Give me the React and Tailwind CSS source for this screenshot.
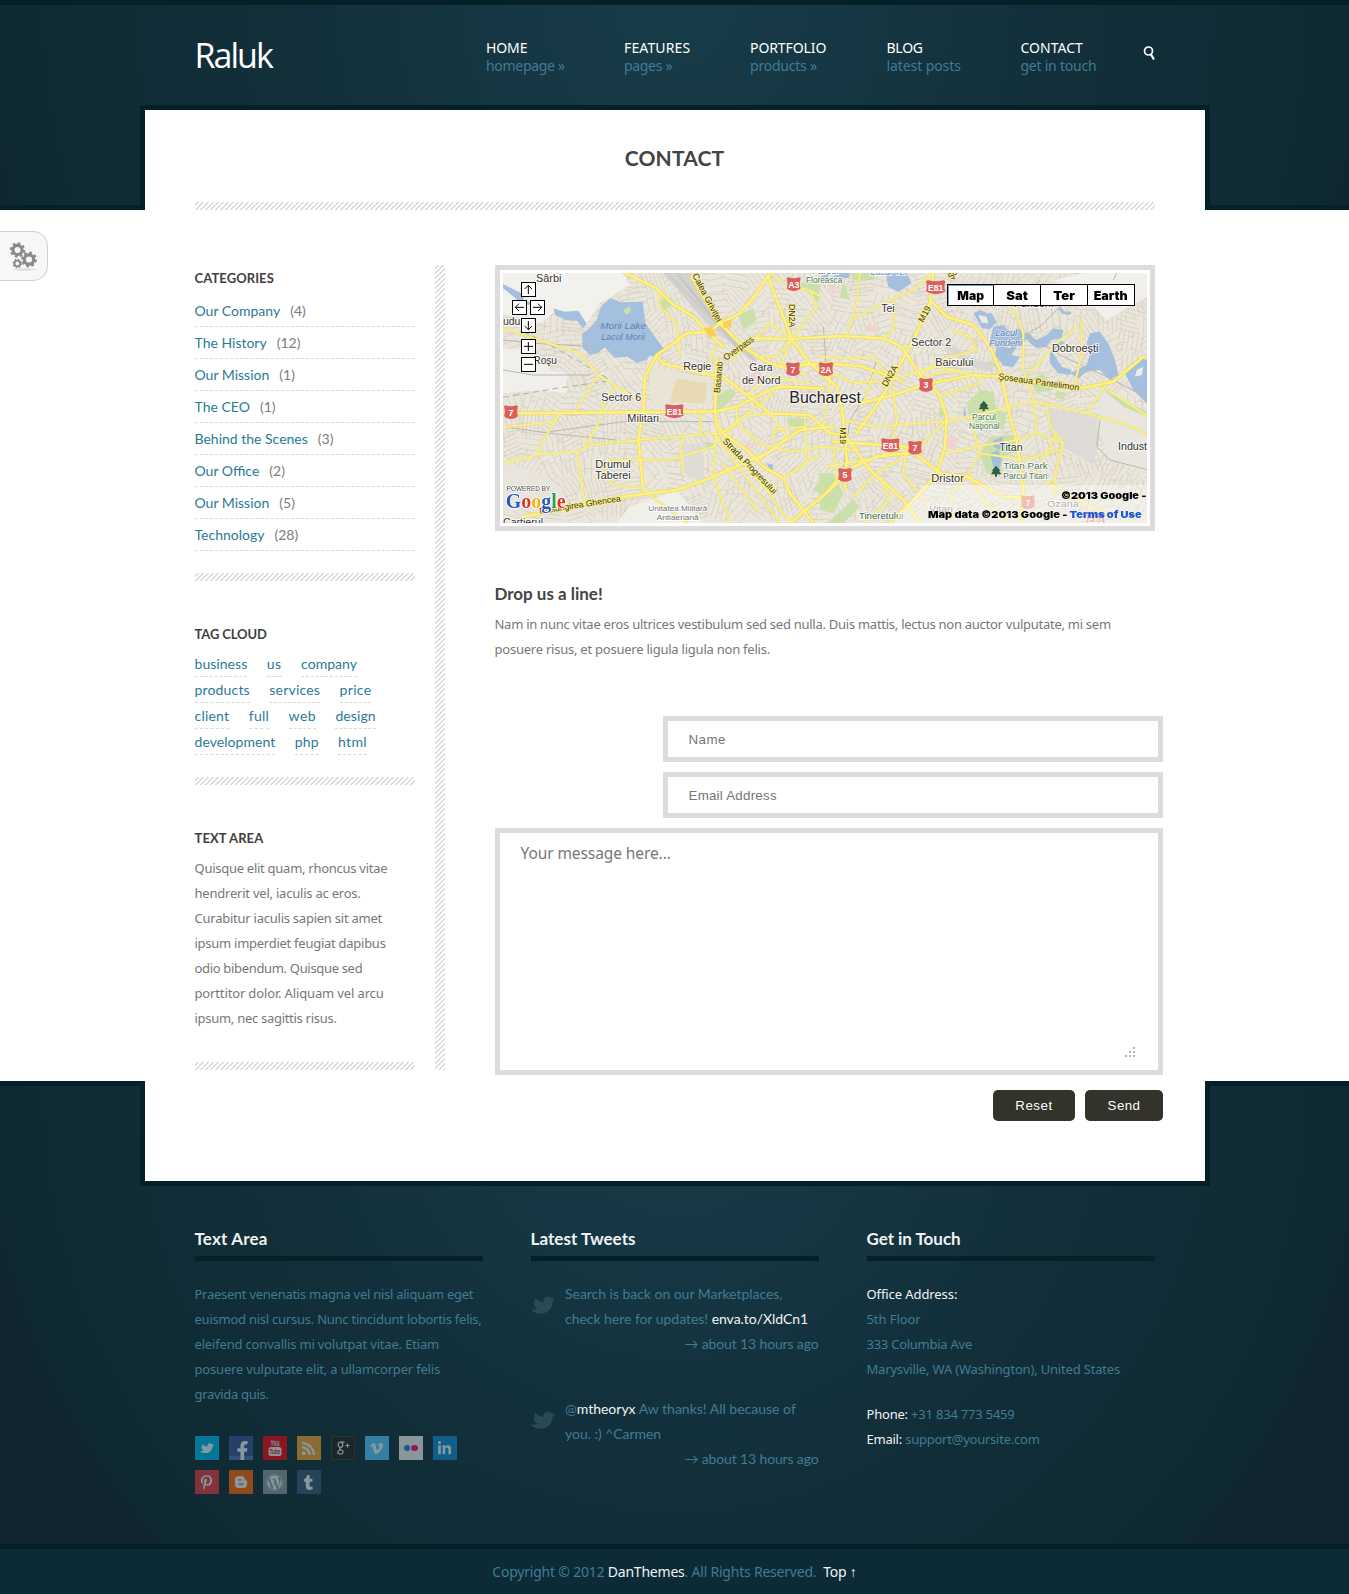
import React, { useLayoutEffect, useRef } from "react";
import {
  FaTwitter, FaFacebookF, FaRss, FaVimeoV, FaLinkedinIn,
  FaPinterestP, FaBloggerB, FaWordpress, FaTumblr,
} from "react-icons/fa";

/* One line of text whose letter spacing is set so that it fills `w` pixels. */
function Line({ w, className = "", children }) {
  const ref = useRef(null);
  useLayoutEffect(() => {
    const el = ref.current;
    el.style.letterSpacing = "0px";
    const natural = el.getBoundingClientRect().width;
    el.style.letterSpacing = (w + 0.8 - natural) / el.textContent.length + "px";
  }, [w]);
  return (
    <span className={"block w-max whitespace-nowrap " + className}>
      <span ref={ref} className="inline-block">{children}</span>
    </span>
  );
}

const Hatch = ({ className = "" }) => (
  <div
    className={
      "bg-[repeating-linear-gradient(135deg,#fff_0,#fff_1.6px,#d9d9d9_2.1px,#d9d9d9_3px,#fff_3.536px)] " + className
    }
  />
);

const nav = [
  ["HOME", 40.5, "homepage »", 78, "w-[138px]"],
  ["FEATURES", 65.5, "pages »", 47.4, "w-[126px]"],
  ["PORTFOLIO", 75.5, "products »", 66, "w-[136.5px]"],
  ["BLOG", 35.5, "latest posts", 73.5, "w-[134px]"],
  ["CONTACT", 61.5, "get in touch", 75, "w-[122px]"],
];

const categories = [
  ["Our Company", 4], ["The History", 12], ["Our Mission", 1], ["The CEO", 1],
  ["Behind the Scenes", 3], ["Our Office", 2], ["Our Mission", 5], ["Technology", 28],
];

const tags = [
  [["business", 52], ["us", 14], ["company", 55]],
  [["products", 54.5], ["services", 50], ["price", 31]],
  [["client", 34], ["full", 19.5], ["web", 26.5], ["design", 39.5]],
  [["development", 80], ["php", 23], ["html", 28]],
];

/* ---------- Map ---------- */

function rng(seed) {
  let s = seed;
  return () => {
    s = (s * 16807) % 2147483647;
    return s / 2147483647;
  };
}

function streetTexture() {
  const r = rng(77);
  const out = [];
  for (let cy = 60; cy < 800; cy += 62) {
    for (let cx = 60; cx < 2000; cx += 62) {
      const a = r() * Math.PI;
      const step = 11 + r() * 9;
      const c = Math.cos(a);
      const s = Math.sin(a);
      for (let k = -36; k <= 36; k += step) {
        const len = 22 + r() * 18;
        out.push(`M${(cx + c * -len - s * k).toFixed(1)} ${(cy + s * -len + c * k).toFixed(1)}L${(cx + c * len - s * k).toFixed(1)} ${(cy + s * len + c * k).toFixed(1)}`);
        if (r() > 0.35) {
          const m = (r() - 0.5) * 50;
          out.push(`M${(cx + c * m - s * k).toFixed(1)} ${(cy + s * m + c * k).toFixed(1)}L${(cx + c * m - s * (k + step)).toFixed(1)} ${(cy + s * m + c * (k + step)).toFixed(1)}`);
        }
      }
    }
  }
  return out.join("");
}
const STREETS = streetTexture();

const majorRoads = [
  "M39 458L90 460L680 454L740 440L830 395L865 380L1000 385",
  "M405 39L500 85L545 130L610 170L660 225L700 260",
  "M605 50L640 110L690 190L760 260L820 300L870 320L1000 310L1110 318L1190 345",
  "M690 190L750 160L800 100L840 39",
  "M690 190L660 215L590 220L550 250L500 285L465 350L460 450L445 540L460 690",
  "M500 290L520 310L640 340L700 350L770 405L840 460L960 465L1020 520L1065 525",
  "M680 300L675 455L680 490L700 520L770 570L820 620L880 655L900 700L970 789",
  "M800 235L905 237L1050 228L1180 235L1235 260L1290 345L1345 400L1370 470L1365 560L1340 640L1300 690L1200 789",
  "M835 50L860 120L905 237L960 310L1000 345L1040 380L1055 440L1065 525L1070 600L1065 690",
  "M1330 39L1320 130L1270 240L1200 370L1150 450L1100 520",
  "M1110 430L1210 405L1300 375L1450 345L1530 350L1620 365L1780 384L1870 365L1960 290",
  "M1320 120L1370 170L1450 195L1500 260L1530 330L1560 470L1580 540L1600 690L1595 789",
  "M1030 545L1250 560L1350 640L1430 650L1540 710L1620 715",
  "M100 770L280 735L400 710L560 690L660 655L830 580L930 510L1030 500",
  "M900 789L1020 690L1090 620L1160 590L1290 575",
  "M1065 525L1140 630L1240 720L1290 789",
];

const minorRoads = [
  "M39 205L130 235L270 280L325 345L445 420",
  "M325 345L255 455", "M375 380L330 455", "M39 502L190 485L210 460L145 565L150 583L260 575L300 555L445 540L690 520",
  "M260 575L285 735", "M330 480L285 560", "M445 600L540 600L670 560L695 520L850 400",
  "M340 650L360 600L445 600", "M340 650L370 675L445 680", "M580 535L570 570L580 635",
  "M505 85L510 140L560 190L570 290", "M640 345L680 260", "M632 450L632 520",
  "M680 490L670 650L720 789", "M680 530L760 640L870 789", "M710 550L830 690L900 789",
  "M700 610L800 750", "M770 405L840 350L960 370", "M840 460L890 530L850 570L800 600",
  "M840 460L760 470L700 530", "M740 440L740 490L810 550L900 575L1000 560L1100 570",
  "M945 500L850 510L850 540", "M945 465L950 610L880 655", "M990 580L880 655",
  "M905 237L840 190L790 240L720 300", "M905 237L870 320L950 345", "M905 237L860 290L810 290",
  "M840 39L900 80L960 90L980 140L905 237", "M990 110L960 90", "M1110 39L1100 130L1070 225",
  "M1095 175L1180 130L1270 90L1330 39", "M1210 120L1210 210L1180 235",
  "M990 290L1060 295L1150 290L1180 330L1240 370", "M990 330L1100 370L1200 360L1340 320L1470 350",
  "M1020 350L1010 440L1000 500", "M1060 480L1150 500L1280 490L1360 485L1440 470L1560 440L1630 425",
  "M1120 430L1150 345", "M1210 380L1220 490L1200 560", "M1350 410L1470 370L1470 345",
  "M1010 620L1130 600L1250 560L1240 640L1330 760", "M1090 710L1160 640L1290 560L1360 490",
  "M1365 580L1460 560L1580 540L1640 520", "M1440 470L1470 580L1540 590L1590 600",
  "M1560 130L1580 170L1600 220L1600 330L1630 420L1640 520L1720 550L1700 620L1690 710",
  "M1630 425L1690 435L1790 460L1900 490L1975 525", "M1790 460L1840 385", "M1620 340L1700 250L1760 200",
  "M1775 175L1775 280L1755 370", "M1670 435L1680 500L1720 550", "M1840 380L1900 420L1975 470",
  "M1470 580L1430 650L1380 700L1390 770", "M1700 520L1640 640L1720 700L1850 760",
  "M1600 600L1710 570", "M1290 345L1350 300L1460 270L1440 230L1390 215",
  "M1440 650L1480 720L1560 789", "M1170 650L1200 720L1120 789", "M1030 560L1040 660L990 720",
  "M39 610L150 583", "M460 690L590 789", "M1290 360L1340 340L1410 330",
];

const grayRoads = [
  "M39 240L130 250L320 260", "M39 330L130 345L300 345", "M39 500L180 520L380 540", "M180 515L400 485L670 485",
  "M1160 300L1130 400L1080 480L1060 620", "M1830 480L1820 560L1860 600L1975 630", "M1730 120L1650 200L1590 230L1540 300",
  "M1880 39L1870 60M1650 60L1600 120", "M1600 220L1720 290L1850 350L1975 415", "M1000 200L1010 330",
];

const parks = [
  "M510 120L540 112L548 135L520 150Z", "M678 410L720 385L738 400L715 430L685 450Z",
  "M745 165L790 145L800 180L760 210Z", "M890 475L950 475L948 500L895 498Z", "M970 690L1000 645L1030 660L1030 700L1000 710Z",
  "M1430 430L1470 390L1510 395L1520 450L1550 460L1540 510L1470 500L1440 480Z",
  "M1470 580L1500 530L1570 525L1580 575L1540 590L1530 650L1490 640Z", "M1350 440L1365 440L1360 470L1345 465Z",
  "M1620 360L1660 340L1690 390L1640 400Z", "M1840 390L1970 455L1970 470L1900 440Z", "M990 640L1030 640L1060 700L1030 760L990 750Z",
  "M1060 60L1080 120L1050 110Z", "M640 545L680 550L660 570Z", "M930 70L990 60L985 130L960 100Z", "M1700 390L1730 400L1720 420L1695 412Z",
  "M1500 300L1530 330L1500 315Z", "M1080 39L1160 39L1150 60L1090 60Z", "M1090 720L1110 740L1060 789L1010 789Z",
];

const water = [
  "M360 115L395 127L458 125L466 190L520 265L500 290L478 288L470 300L440 308L412 290L372 293L345 262L322 280L300 284L278 264L276 222L298 205L320 180L332 140Z",
  "M39 72L105 105L100 120L150 135L145 145L90 125L39 85Z",
  "M190 145L225 155L265 152L290 192L278 205L262 182L228 180L196 165Z",
  "M1190 60L1195 80L1225 95L1265 70L1250 39L1190 39Z",
  "M1450 160L1470 150L1490 160L1505 160L1520 185L1500 208L1475 205L1462 180Z",
  "M1510 200L1540 195L1560 215L1590 205L1600 225L1620 220L1630 235L1590 245L1565 285L1590 290L1570 320L1540 318L1515 285L1520 260L1500 240Z",
  "M1615 225L1640 240L1670 225L1690 205L1720 210L1715 235L1685 240L1670 260L1640 265L1615 245Z",
  "M1700 262L1690 280L1715 320L1745 330L1740 345L1705 340L1680 310L1680 280L1710 240L1725 250Z",
  "M1800 220L1830 215L1855 250L1875 300L1885 345L1860 360L1830 330L1790 335L1765 355L1740 340L1790 315L1800 280L1790 250Z",
  "M1905 340L1925 310L1950 295L1975 300L1975 435L1930 390Z",
  "M1710 140L1725 155L1745 155L1740 165L1718 162L1705 148Z",
  "M1510 540L1540 530L1530 570L1510 560Z", "M1500 580L1525 570L1535 600L1525 640L1510 620Z",
  "M830 610L850 615L845 640Z", "M1040 39L1080 39L1075 55L1030 50Z", "M1425 440L1428 470L1420 465Z", "M990 50L1020 39L1010 60Z",
  "M415 395L425 400L422 420Z",
];

function Label({ x, y, w, s = 32, c = "#333", r = 0, halo = "#fff", children, i }) {
  return (
    <text
      transform={`translate(${x} ${y}) rotate(${r})`}
      textLength={w} lengthAdjust="spacingAndGlyphs" fontSize={s} fill={c}
      stroke={halo} strokeOpacity="0.75" strokeWidth="6" strokeLinejoin="round"
      fontStyle={i ? "italic" : "normal"} style={{ paintOrder: "stroke" }}
    >
      {children}
    </text>
  );
}

function Shield({ x, y, w = 42, children }) {
  return (
    <g transform={`translate(${x} ${y})`}>
      <path
        d={`M${-w / 2} -18L${-w / 2 + 6} -21Q0 -15 ${w / 2 - 6} -21L${w / 2} -18Q${w / 2 - 5} 0 ${w / 2} 12Q${w / 4} 22 0 20Q${-w / 4} 22 ${-w / 2} 12Q${-w / 2 + 5} 0 ${-w / 2} -18Z`}
        fill="#dc5f60"
      />
      <text y="10" textAnchor="middle" fontSize="26" fontWeight="bold" fill="#fff">{children}</text>
    </g>
  );
}

function MapButton({ x, y, d }) {
  return (
    <g transform={`translate(${x} ${y})`}>
      <rect x="3" y="3" width="42" height="42" fill="#777" />
      <rect x="1.5" y="1.5" width="42" height="42" fill="#fff" stroke="#000" strokeWidth="3" />
      <path d={d} stroke="#000" strokeWidth="3" fill="none" />
    </g>
  );
}

function CityMap() {
  return (
    <svg width="644" height="250" viewBox="39 39 1932 750" className="block" fontFamily='"Liberation Sans", sans-serif'>
      <rect x="39" y="39" width="1932" height="750" fill="#ebe6dc" />
      <path d={STREETS} stroke="#d5cdbd" strokeWidth="2.2" fill="none" />
      <path d="M39 39L400 39L420 75L330 130L290 190L200 150L150 190L39 160Z" fill="#f3f1ee" />
      <path d="M39 265L120 270L180 330L230 340L230 400L150 390L39 400Z" fill="#f1efec" />
      <path d="M120 630L215 680L225 730L39 760L39 600Z" fill="#e9e5dd" />
      <path d="M380 789L420 740L560 690L640 789Z" fill="#f1efea" />
      <path d="M480 320L600 345L660 350L665 440L480 440Z" fill="#e9e4d6" />
      <path d="M560 355L650 370L645 430L540 425Z" fill="#e6d9b4" />
      <path d="M580 550L640 555L640 670L585 640Z" fill="#dfdbd5" />
      <path d="M1670 440L1790 465L1870 510L1830 530L1810 612L1720 560L1680 500Z" fill="#dedad5" />
      <path d="M1840 390L1975 470L1975 640L1860 600L1820 500Z" fill="#e9e6df" />
      <path d="M1780 39L1971 39L1971 110L1850 180L1800 130L1690 60Z" fill="#f2f0ec" />
      <path d="M1350 250L1390 255L1440 300L1520 310L1500 335L1440 320Z" fill="#d9d6d1" />
      <path d="M520 39L600 39L700 190L800 300L780 300L650 190Z" fill="#d3d2cf" />
      <path d="M530 39L690 200M560 39L710 230L800 305M580 60L740 260" stroke="#bfbfbd" strokeWidth="3" fill="none" />
      <path d="M785 340L830 350L810 375L775 360ZM760 540L795 555L780 575ZM1010 70L1040 80L1030 110ZM1130 195L1160 195L1160 215L1130 215ZM1370 530L1400 530L1395 570L1370 565Z" fill="#f2d3cd" />
      <path d={parks.join("")} fill="#cadfaa" />
      <path d={water.join("")} fill="#a5bfdf" />
      <path d="M400 150L420 138L422 155L408 165Z" fill="#cadfaa" />
      <path d="M1465 165L1490 170L1495 190L1475 188ZM1550 240L1575 240L1560 265L1545 260ZM1940 330L1960 320L1955 345L1935 350Z" fill="#efece4" />
      <g fill="none" stroke="#b9b7b3" strokeWidth="3">{grayRoads.map((d) => <path key={d} d={d} />)}</g>
      <path d="M100 215L190 260L260 300L360 360M39 412L200 385L360 362" stroke="#b0aeac" strokeWidth="3" strokeDasharray="18 12" fill="none" />
      <g fill="none" strokeLinejoin="round" strokeLinecap="round">
        <g stroke="#e3d67a" strokeWidth="7">{minorRoads.map((d) => <path key={d} d={d} />)}</g>
        <g stroke="#e3d26c" strokeWidth="11">{majorRoads.map((d) => <path key={d} d={d} />)}</g>
        <g stroke="#fbf286" strokeWidth="5">{minorRoads.map((d) => <path key={d} d={d} />)}</g>
        <g stroke="#fff27c" strokeWidth="8">{majorRoads.map((d) => <path key={d} d={d} />)}</g>
      </g>
      <path d="M640 205L665 200L680 225L660 232ZM700 185L725 180L722 200L700 205Z" fill="#f7cf55" />

      <Label x={138} y={66} w={76}>Sârbi</Label>
      <Label x={39} y={195} w={52}>udu</Label>
      <Label x={130} y={313} w={71}>Roşu</Label>
      <Label x={331} y={208} w={137} s={29} c="#5b82b5" halo="#a5bfdf" i>Morii Lake</Label>
      <Label x={334} y={240} w={130} s={25} c="#5b82b5" halo="#a5bfdf" i>Lacul Morii</Label>
      <Label x={580} y={329} w={84}>Regie</Label>
      <Label x={778} y={334} w={70}>Gara</Label>
      <Label x={756} y={373} w={116}>de Nord</Label>
      <Label x={334} y={422} w={120}>Sector 6</Label>
      <Label x={412} y={485} w={95}>Militari</Label>
      <Label x={316} y={623} w={106}>Drumul</Label>
      <Label x={316} y={658} w={106}>Taberei</Label>
      <Label x={475} y={752} w={177} s={24} c="#777">Unitatea Militară</Label>
      <Label x={500} y={779} w={126} s={24} c="#777">Antiaeriană</Label>
      <Label x={39} y={797} w={120}>Cartierul</Label>
      <Label x={898} y={430} w={215} s={48} c="#222">Bucharest</Label>
      <Label x={948} y={68} w={109} s={25} c="#4c7a55">Floreasca</Label>
      <Label x={965} y={42} w={80} s={25} c="#4c7a55">Parcul</Label>
      <Label x={1142} y={46} w={108} s={25} c="#5b82b5" i>Lacul Tei</Label>
      <Label x={1174} y={155} w={40}>Tei</Label>
      <Label x={1264} y={259} w={120}>Sector 2</Label>
      <Label x={1336} y={319} w={114}>Baicului</Label>
      <Label x={1686} y={275} w={139}>Dobroeşti</Label>
      <Label x={1572} y={140} w={118}>Fundeni</Label>
      <Label x={1516} y={228} w={65} s={25} c="#5b82b5" halo="#dbe4ee" i>Lacul</Label>
      <Label x={1498} y={257} w={98} s={25} c="#5b82b5" halo="#dbe4ee" i>Fundeni</Label>
      <Label x={1446} y={480} w={72} s={25} c="#4c7a55">Parcul</Label>
      <Label x={1437} y={507} w={92} s={25} c="#4c7a55">Naţional</Label>
      <Label x={1528} y={572} w={70}>Titan</Label>
      <Label x={1540} y={628} w={133} s={29} c="#4c7a55">Titan Park</Label>
      <Label x={1540} y={656} w={132} s={25} c="#4c7a55">Parcul Titan</Label>
      <Label x={1324} y={665} w={98}>Dristor</Label>
      <Label x={1884} y={569} w={87}>Indust</Label>
      <Label x={1107} y={778} w={133} s={27} c="#3f6b48">Tineretului</Label>
      <Label x={1317} y={755} w={72} c="#777" s={28}>Vitan</Label>
      <Label x={1671} y={742} w={95} c="#777" s={28}>Ozana</Label>

      <Label x={606} y={46} w={160} s={27} r={62} halo="#fff27c">Calea Griviţei</Label>
      <Label x={708} y={302} w={105} s={27} r={-35} halo="#fff27c">Overpass</Label>
      <Label x={690} y={400} w={95} s={27} r={-85} halo="#fff27c">Basarab</Label>
      <Label x={898} y={132} w={70} s={27} r={90} halo="#fff27c">DN2A</Label>
      <Label x={697} y={545} w={220} s={27} r={46} halo="#fff27c">Strada Progresului</Label>
      <Label x={150} y={762} w={246} s={26} r={-9} halo="#fff27c">Prelungirea Ghencea</Label>
      <Label x={1300} y={188} w={50} s={27} r={-62} halo="#fff27c">M19</Label>
      <Label x={1190} y={382} w={68} s={27} r={-60} halo="#fff27c">DN2A</Label>
      <Label x={1050} y={502} w={50} s={27} r={90} halo="#fff27c">M19</Label>
      <Label x={1524} y={358} w={245} s={27} r={8} halo="#fff27c">Şoseaua Pantelimon</Label>
      <Label x={1385} y={60} w={40} s={27} r={-50} halo="#fff27c">Şos</Label>

      <path d="M1481 422L1495 438L1490 438L1497 448H1484V454H1478V448H1466L1472 438H1468ZM1518 617L1532 633L1527 633L1534 643H1521V650H1515V643H1503L1509 633H1505Z" fill="#2f6045" />

      <Shield x={63} y={457}>7</Shield>
      <Shield x={553} y={454} w={56}>E81</Shield>
      <Shield x={911} y={73}>A3</Shield>
      <Shield x={909} y={328}>7</Shield>
      <Shield x={1008} y={328} w={44}>2A</Shield>
      <Shield x={1308} y={375}>3</Shield>
      <Shield x={1337} y={82} w={58}>E81</Shield>
      <Shield x={1201} y={556} w={56}>E81</Shield>
      <Shield x={1275} y={563}>7</Shield>
      <Shield x={1065} y={645}>5</Shield>
      <g opacity="0.6"><Shield x={1614} y={727}>7</Shield><Shield x={1817} y={778} w={56}>E81</Shield></g>

      <path d="M1300 675H1971V789H1210Z" fill="#fff" opacity="0.4" />

      <MapButton x={93} y={66} d="M22 36V10M11 21L22 10L33 21" />
      <MapButton x={66} y={120} d="M36 22H10M21 11L10 22L21 33" />
      <MapButton x={120} y={120} d="M9 22H35M24 11L35 22L24 33" />
      <MapButton x={93} y={174} d="M22 9V35M11 24L22 35L33 24" />
      <MapButton x={93} y={237} d="M9 22H36M22 9V36" />
      <MapButton x={93} y={291} d="M9 22H36" />

      <text x="50" y="692" textLength="131" fontSize="19" fill="#444" stroke="#fff" strokeWidth="3" style={{ paintOrder: "stroke" }}>POWERED BY</text>
      <text x="47" y="745" textLength="180" lengthAdjust="spacingAndGlyphs" fontSize="64" fontWeight="bold" fontFamily='"Liberation Serif", serif' stroke="#fff" strokeWidth="5" style={{ paintOrder: "stroke" }}>
        <tspan fill="#2a56c6">G</tspan><tspan fill="#d8362a">o</tspan><tspan fill="#f2b50f">o</tspan><tspan fill="#2a56c6">g</tspan><tspan fill="#2f9e44">l</tspan><tspan fill="#d8362a">e</tspan>
      </text>

      <rect x="1372.500" y="73.500" width="561" height="63" fill="#fff" stroke="#000" strokeWidth="3" />
      <path d="M1510.500 72V137M1651.500 72V137M1792.500 72V137" stroke="#000" strokeWidth="3" />
      <path d="M1375.500 134V76.500H1508" stroke="#6f9be0" strokeWidth="3" fill="none" />
      <g fontFamily="Inter, sans-serif" fontWeight="900" fontSize="37">
        <text x="1402" y="120" textLength="80" lengthAdjust="spacingAndGlyphs">Map</text>
        <text x="1549" y="120" textLength="65" lengthAdjust="spacingAndGlyphs">Sat</text>
        <text x="1690" y="120" textLength="65" lengthAdjust="spacingAndGlyphs">Ter</text>
        <text x="1811" y="120" textLength="102" lengthAdjust="spacingAndGlyphs">Earth</text>
      </g>
      <g fontFamily="Inter, sans-serif" fontWeight="900" fontSize="28">
        <text x="1713" y="716" textLength="256" lengthAdjust="spacingAndGlyphs">©2013 Google -</text>
        <text x="1314" y="773" textLength="641" lengthAdjust="spacingAndGlyphs">Map data ©2013 Google - <tspan fill="#1a57d6">Terms of Use</tspan></text>
      </g>
    </svg>
  );
}

/* ---------- Small drawings ---------- */

const Gear = ({ x, y, r }) => (
  <g transform={`translate(${x} ${y})`}>
    <circle r={r * 0.62} fill="none" stroke="#8a8a8a" strokeWidth={r * 0.42} />
    <circle r={r * 0.9} fill="none" stroke="#8a8a8a" strokeWidth={r * 0.28} strokeDasharray={`${r * 0.36} ${r * 0.347}`} />
  </g>
);

function SettingsTab() {
  return (
    <div className="absolute left-0 top-[231px] h-[50px] w-[48px] rounded-r-[15px] border border-l-0 border-[#d0d0d0] bg-[#f7f7f7]">
      <svg width="32" height="32" viewBox="0 0 32 32" className="ml-[8px] mt-[9px]">
        <ellipse cx="17" cy="28.500" rx="12" ry="1.200" fill="#ddd" />
        <Gear x={9.5} y={9} r={7.4} />
        <Gear x={21} y={18.5} r={7.6} />
        <Gear x={9.3} y={22.5} r={4.6} />
      </svg>
    </div>
  );
}

/* The older bird mark, with a crest and an open wing. */
const Bird = ({ width, className = "" }) => (
  <svg width={width} viewBox="0 0 24 18" className={className} fill="currentColor">
    <path d="M0 13.200C2.500 14 5 13.600 6.600 12.400C4.800 12.100 3.900 11 3.700 9.800C2.300 8.600 2 7.500 2.300 6.300C3 6.700 3.600 6.800 4.300 6.800C3.300 5.200 3.200 3.400 3.900 1.800C6.300 4 9.200 5.600 12.300 6.200C12.200 3 14.200 0.700 16.800 0.500C18.600 0.400 19.800 1.200 20.600 2.300C21.400 2.300 22.300 1.900 23 1.500C22.700 2.500 22.300 3 21.800 3.600C22.500 3.700 23.200 3.700 24 3.500C23.400 4.500 22.500 5.200 21.600 5.700C21.600 12.500 16.500 17.600 9.800 17.600C5.500 17.600 1.800 16.200 0 13.200Z" />
  </svg>
);

const YouTube = () => (
  <svg width="16" height="18" viewBox="0 0 16 18">
    <text x="8" y="7" textAnchor="middle" textLength="9" lengthAdjust="spacingAndGlyphs" fontSize="8.500" fontWeight="bold" fill="#84989f" fontFamily='"Liberation Sans", sans-serif'>You</text>
    <rect x="1.500" y="8" width="13" height="9" rx="2.500" fill="#84989f" />
    <text x="8" y="15" textAnchor="middle" textLength="11" lengthAdjust="spacingAndGlyphs" fontSize="7" fontWeight="bold" fill="#89171d" fontFamily='"Liberation Sans", sans-serif'>Tube</text>
  </svg>
);

const GooglePlus = () => (
  <svg width="18" height="20" viewBox="0 0 18 20" fill="none" stroke="#84989f" strokeWidth="1.200">
    <ellipse cx="6.500" cy="6.800" rx="2.300" ry="2.600" />
    <path d="M10.500 4.200H7M7 9.500C5 10.300 5.200 11.200 7.200 11.800C10 12.700 9.800 16 6.300 16C2.900 16 2.800 12.600 7 12M11.500 7.500H15.500M13.500 5.500V9.500" />
  </svg>
);

const Flickr = () => (
  <span className="flex gap-px">
    <span className="size-[6.500px] rounded-full bg-[#0f5f8c]" />
    <span className="size-[6.500px] rounded-full bg-[#8f1a5e]" />
  </span>
);

const social = [
  ["bg-[#03779a]", <Bird width={14} />],
  ["bg-[linear-gradient(#26406a_20px,#35507a_20px)]", <FaFacebookF size={19} className="ml-1 mt-[4px]" />],
  ["bg-[#89171d]", <YouTube />],
  ["bg-[#8a6c30]", <FaRss size={15} />],
  ["bg-[#1c272c] border border-[#2b3439]", <GooglePlus />],
  ["bg-[#357fa4]", <FaVimeoV size={15} />],
  ["bg-[#8a969b]", <Flickr />],
  ["bg-[#0f5e8b]", <FaLinkedinIn size={15} />],
  ["bg-[#84333a]", <FaPinterestP size={15} />],
  ["bg-[#904a1b]", <FaBloggerB size={14} />],
  ["bg-[#55656d]", <FaWordpress size={17} />],
  ["bg-[#26435a]", <FaTumblr size={15} />],
];

const FooterTitle = ({ w, children }) => (
  <h3 className="box-content h-[35px] border-b-[5px] border-[#052127] font-['Lato',sans-serif] text-[17px] font-bold leading-[36px] text-[#f0f2f2]">
    <Line w={w}>{children}</Line>
  </h3>
);

function Tweet({ children }) {
  return (
    <div className="flex">
      <Bird width={24} className="mr-[10.5px] mt-[15px] h-[18px] shrink-0 text-[#2b4a55]" />
      <div className="flex-1 font-['Lato',sans-serif] text-[14px] leading-[25px]">
        {children}
        <Line w={133.2} className="ml-auto">→ about 13 hours ago</Line>
      </div>
    </div>
  );
}

const White = ({ children }) => <span className="text-[#f2f4f4]">{children}</span>;

const SideTitle = ({ w, children }) => (
  <h4 className="font-['Lato',sans-serif] text-[13px] font-bold leading-[20px] text-[#3f3f3f]"><Line w={w}>{children}</Line></h4>
);

const glow = "bg-[radial-gradient(circle_700px_at_50%_0%,#183c49_0px,#122f3a_400px,#0e2931_680px,#102530_700px)]";

export default function App() {
  return (
    <div className="relative min-h-[1594px] w-full overflow-hidden bg-white font-['Noto_Sans',sans-serif]">
      <header className={"h-[210px] border-t-[5px] border-[#052127] " + glow}>
        <div className="mx-auto flex h-[100px] w-[960px] justify-between">
          <div className="w-[292.500px] pt-[29px] font-['Open_Sans',sans-serif] text-[34px] leading-[42px] text-white">
            <Line w={76.5}>Raluk</Line>
          </div>
          <nav className="flex flex-1 pt-[34px] text-[14px] leading-[18px]">
            {nav.map(([t, tw, s, sw, cls]) => (
              <div key={t} className={cls}>
                <Line w={tw} className="text-white">{t}</Line>
                <Line w={sw} className="text-[#427b92]">{s}</Line>
              </div>
            ))}
          </nav>
          <svg width="12" height="15" viewBox="0 0 12 15" className="mt-[41px] shrink-0" fill="none" stroke="#fff">
            <circle cx="5.500" cy="5" r="4" strokeWidth="1.700" />
            <path d="M8 8.500L11 13.500" strokeWidth="2.200" />
          </svg>
        </div>
        <div className="grid h-[105px] grid-cols-[1fr_1070px_1fr]">
          <div className="border-b-[5px] border-[#052127]" />
          <div className="flex flex-col items-center justify-between border-x-[5px] border-t-[5px] border-[#052127] bg-white">
            <h1 className="pt-[33px] font-['Lato',sans-serif] text-[21px] font-bold leading-[30px] text-[#444]"><Line w={98.6}>CONTACT</Line></h1>
            <Hatch className="h-[8px] w-[960px]" />
          </div>
          <div className="border-b-[5px] border-[#052127]" />
        </div>
      </header>

      <SettingsTab />

      <main className="mx-auto flex h-[871px] w-[960px] pt-[55px]">
        <aside className="w-[220px]">
          <div className="pt-[3px]">
            <SideTitle w={78.6}>CATEGORIES</SideTitle>
            <ul className="pt-[7px] font-['Lato',sans-serif] text-[14px]">
              {categories.map(([n, c], i) => (
                <li key={i} className="h-[32px] border-b border-dashed border-[#d8d8d8] text-[#7d7d7d] leading-[32px]">
                  <a className="mr-[10px] text-[#2a7a97]">{n}</a>({c})
                </li>
              ))}
            </ul>
            <Hatch className="mt-[22px] h-[8px]" />
          </div>
          <div className="pt-[43px]">
            <SideTitle w={71.5}>TAG CLOUD</SideTitle>
            <div className="flex flex-col gap-px pt-[7px] font-['Lato',sans-serif] text-[14px] text-[#2a7a97]">
              {tags.map((row, i) => (
                <div key={i} className="flex h-[25px] gap-[19.500px] leading-[25px]">
                  {row.map(([t, w]) => (
                    <a key={t} className="h-[26px] border-b border-dashed border-[#d8d8d8]"><Line w={w}>{t}</Line></a>
                  ))}
                </div>
              ))}
            </div>
            <Hatch className="mt-[23px] h-[8px]" />
          </div>
          <div className="pt-[43px]">
            <SideTitle w={68}>TEXT AREA</SideTitle>
            <div className="pt-[8px] text-[13px] leading-[25px] text-[#777]">
              <Line w={192}>Quisque elit quam, rhoncus vitae</Line>
              <Line w={165.3}>hendrerit vel, iaculis ac eros.</Line>
              <Line w={186.7}>Curabitur iaculis sapien sit amet</Line>
              <Line w={190.3}>ipsum imperdiet feugiat dapibus</Line>
              <Line w={167}>odio bibendum. Quisque sed</Line>
              <Line w={188.3}>porttitor dolor. Aliquam vel arcu</Line>
              <Line w={141.3}>ipsum, nec sagittis risus.</Line>
            </div>
            <Hatch className="mt-[31px] h-[8px]" />
          </div>
        </aside>

        <Hatch className="ml-[20px] h-[805px] w-[10px] shrink-0" />

        <section className="ml-[50px] w-[660px] shrink-0">
          <div className="h-[266px] border-[5px] border-[#dcdcdc] bg-white p-[3px]"><CityMap /></div>
          <h2 className="mt-[50px] font-['Lato',sans-serif] text-[17px] font-bold leading-[26px] text-[#444]"><Line w={107.4}>Drop us a line!</Line></h2>
          <div className="pt-[5px] text-[13px] leading-[25px] text-[#777]">
            <Line w={615.5}>Nam in nunc vitae eros ultrices vestibulum sed sed nulla. Duis mattis, lectus non auctor vulputate, mi sem</Line>
            <Line w={274.6}>posuere risus, et posuere ligula ligula non felis.</Line>
          </div>
          <form className="mt-[54px] flex w-[668px] flex-col items-end gap-[10px] font-['Liberation_Sans',sans-serif] text-[13.333px] text-[#757575]">
            <div className="h-[46px] w-[500px] border-[5px] border-[#dcdcdc] px-[21px] leading-[38px]"><Line w={36.5}>Name</Line></div>
            <div className="h-[46px] w-[500px] border-[5px] border-[#dcdcdc] px-[21px] leading-[38px]"><Line w={87.5}>Email Address</Line></div>
            <div className="flex h-[247px] w-[668px] flex-col justify-between border-[5px] border-[#dcdcdc] pl-[21px] pr-[23px] pt-[9px]">
              <Line w={149.5} className="font-['Noto_Sans',sans-serif] text-[15.500px] leading-[22px] text-[#777]">Your message here...</Line>
              <svg width="10" height="10" viewBox="0 0 10 10" className="mb-[13px] ml-auto" fill="#b5b5b5">
                <path d="M8 0h2v2h-2zM4 4h2v2h-2zM8 4h2v2h-2zM0 8h2v2h-2zM4 8h2v2h-2zM8 8h2v2h-2z" />
              </svg>
            </div>
          </form>
        </section>
      </main>

      <footer>
        <div className={"h-[463px] " + glow}>
          <div className="grid h-[105px] grid-cols-[1fr_1070px_1fr]">
            <div className="border-t-[5px] border-[#052127]" />
            <div className="flex items-start justify-end gap-[10px] border-x-[5px] border-b-[5px] border-[#052127] bg-white pr-[42px] pt-[9px] font-['Liberation_Sans',sans-serif] text-[13.333px] text-white">
              <button className="h-[31px] w-[82px] rounded-[5px] bg-[#33332c] pl-px"><Line w={36.700} className="mx-auto">Reset</Line></button>
              <button className="h-[31px] w-[78px] rounded-[5px] bg-[#33332c] pl-px"><Line w={32} className="mx-auto">Send</Line></button>
            </div>
            <div className="border-t-[5px] border-[#052127]" />
          </div>
          <div className="mx-auto grid w-[960px] grid-cols-3 gap-[48px] pt-[35px] text-[13px] leading-[25px] text-[#427b92]">
            <div>
              <FooterTitle w={72.3}>Text Area</FooterTitle>
              <div className="pt-[21px]">
                <Line w={278}>Praesent venenatis magna vel nisl aliquam eget</Line>
                <Line w={286.3}>euismod nisl cursus. Nunc tincidunt lobortis felis,</Line>
                <Line w={243.7}>eleifend convallis mi volutpat vitae. Etiam</Line>
                <Line w={244.7}>posuere vulputate elit, a ullamcorper felis</Line>
                <Line w={73.3}>gravida quis.</Line>
              </div>
              <div className="flex flex-wrap gap-[10px] pt-[29px]">
                {social.map(([bg, icon], i) => (
                  <a key={i} className={"flex size-[24px] items-center justify-center overflow-hidden text-[#84989f] " + bg}>{icon}</a>
                ))}
              </div>
            </div>
            <div>
              <FooterTitle w={104.3}>Latest Tweets</FooterTitle>
              <div className="flex flex-col gap-[40px] pt-[20px]">
                <Tweet>
                  <Line w={216.7}>Search is back on our Marketplaces,</Line>
                  <Line w={242.3}>check here for updates! <White>enva.to/XldCn1</White></Line>
                </Tweet>
                <Tweet>
                  <Line w={230}>@<White>mtheoryx</White> Aw thanks! All because of</Line>
                  <Line w={95.3}>you. :) ^Carmen</Line>
                </Tweet>
              </div>
            </div>
            <div>
              <FooterTitle w={93.3}>Get in Touch</FooterTitle>
              <div className="pt-[21px]">
                <Line w={90}><White>Office Address:</White></Line>
                <Line w={53.3}>5th Floor</Line>
                <Line w={104.7}>333 Columbia Ave</Line>
                <Line w={252.7}>Marysville, WA (Washington), United States</Line>
                <Line w={147.3} className="mt-[20px]"><White>Phone:</White> +31 834 773 5459</Line>
                <Line w={172.3}><White>Email:</White> support@yoursite.com</Line>
              </div>
            </div>
          </div>
        </div>
        <div className="flex h-[50px] justify-center border-t-[5px] border-[#052127] bg-[#0c2b37] text-[14px] leading-[46px] text-[#427b92]">
          <Line w={363.5}>Copyright © 2012 <White>DanThemes</White>. All Rights Reserved. &nbsp;<White>Top ↑</White></Line>
        </div>
      </footer>
    </div>
  );
}
